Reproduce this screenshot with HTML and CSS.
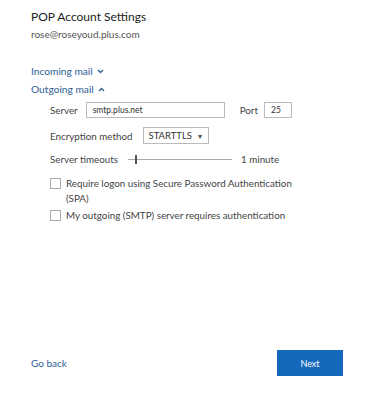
FILE: index.html
```html
<!DOCTYPE html>
<html>
<head>
<meta charset="utf-8">
<link rel="stylesheet" href="styles.css">
</head>
<body>
<div class="page">
  <h1 class="title">POP Account Settings</h1>
  <div class="email">rose@roseyoud.plus.com</div>

  <div class="section incoming">Incoming mail
    <svg class="chev" width="7" height="5" viewBox="0 0 7 5"><path d="M1 1 L3.5 3.5 L6 1" fill="none" stroke="#2d6095" stroke-width="1.4"/></svg>
  </div>
  <div class="section outgoing">Outgoing mail
    <svg class="chev" width="7" height="5" viewBox="0 0 7 5"><path d="M1 4 L3.5 1.5 L6 4" fill="none" stroke="#2d6095" stroke-width="1.4"/></svg>
  </div>

  <div class="form">
    <div class="row server-row">
      <span class="label">Server</span>
      <div class="input server-input">smtp.plus.net</div>
      <span class="label port-label">Port</span>
      <div class="input port-input">25</div>
    </div>
    <div class="row enc-row">
      <span class="label">Encryption method</span>
      <div class="select">STARTTLS <span class="arrow">▾</span></div>
    </div>
    <div class="row time-row">
      <span class="label">Server timeouts</span>
      <div class="slider"><div class="track"></div><div class="thumb"></div></div>
      <span class="label minute">1 minute</span>
    </div>
    <div class="check">
      <span class="box"></span>
      <span class="ctext">Require logon using Secure Password Authentication<br>(SPA)</span>
    </div>
    <div class="check check2">
      <span class="box"></span>
      <span class="ctext">My outgoing (SMTP) server requires authentication</span>
    </div>
  </div>

  <div class="footer">
    <span class="back">Go back</span>
    <button class="next">Next</button>
  </div>
</div>
</body>
</html>
```
FILE: styles.css
```css
html, body {
  margin: 0;
  padding: 0;
  background: #fff;
}
body {
  font-family: Lato, "Noto Sans", sans-serif;
  color: #333;
}
.page {
  height: 400px;
  box-sizing: border-box;
  padding: 9px 22px 24px 31px;
  display: flex;
  flex-direction: column;
}
.title {
  margin: 0;
  font-size: 12px;
  font-weight: normal;
  color: #222;
  line-height: 16px;
}
.email {
  margin-top: 2px;
  font-size: 10px;
  color: #555;
  line-height: 14px;
}
.section {
  font-size: 10.2px;
  color: #2d6095;
  line-height: 14px;
  display: flex;
  align-items: center;
  gap: 4px;
}
.incoming { margin-top: 23px; }
.outgoing { margin-top: 4px; }
.chev { margin-top: 1px; }
.form {
  padding-left: 19px;
  font-size: 9.8px;
  color: #444;
}
.row {
  display: flex;
  align-items: center;
}
.server-row { margin-top: 6px; height: 16px; }
.label { line-height: 14px; }
.input {
  height: 16px;
  box-sizing: border-box;
  border: 1px solid #bbb;
  font-size: 8.5px;
  line-height: 14px;
  padding-left: 6px;
  color: #333;
}
.server-input { width: 139px; margin-left: 8px; }
.port-label { margin-left: 15px; }
.port-input { width: 28px; margin-left: 6px; }
.enc-row { margin-top: 9px; height: 17px; }
.select {
  margin-left: 10px;
  width: 66px;
  height: 17px;
  box-sizing: border-box;
  border: 1px solid #bbb;
  font-size: 9.5px;
  line-height: 15px;
  padding-left: 5px;
  color: #333;
}
.arrow { font-size: 8px; color: #555; margin-left: 4px; }
.time-row { margin-top: 7px; height: 16px; }
.slider {
  position: relative;
  width: 104px;
  height: 10px;
  margin-left: 10px;
}
.track {
  position: absolute;
  left: 0; right: 0; top: 5px;
  height: 1px;
  background: #aaa;
}
.thumb {
  position: absolute;
  left: 7px; top: 1px;
  width: 2px; height: 9px;
  background: #555;
}
.minute { margin-left: 9px; }
.check {
  display: flex;
  align-items: flex-start;
  margin-top: 9px;
  line-height: 15px;
}
.check2 { margin-top: 2px; }
.box {
  width: 9px; height: 9px;
  border: 1px solid #aaa;
  margin-top: 2px;
  margin-right: 5px;
  flex: none;
}
.footer {
  margin-top: auto;
  display: flex;
  justify-content: space-between;
  align-items: center;
}
.back {
  font-size: 10px;
  color: #2d6095;
}
.next {
  width: 66px;
  height: 26px;
  border: none;
  background: #1569bb;
  color: #fff;
  font-family: inherit;
  font-size: 9px;
  padding: 0;
}
```
